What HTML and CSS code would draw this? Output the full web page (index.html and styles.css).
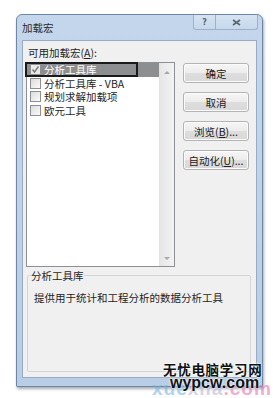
FILE: index.html
```html
<!DOCTYPE html>
<html lang="zh-CN">
<head>
<meta charset="utf-8">
<title>加载宏</title>
<link rel="stylesheet" href="styles.css">
</head>
<body>
<div class="window">
  <div class="titlebar">
    <span class="title">加载宏</span>
    <div class="caption-btns">
      <span class="cbtn help">?</span>
      <span class="cbtn close"><svg width="9" height="7" viewBox="0 0 9 7"><path d="M1 1 L8 6 M8 1 L1 6" stroke="#5a6470" stroke-width="1.6" fill="none"/></svg></span>
    </div>
  </div>
  <div class="client">
    <div class="label">可用加载宏(<u>A</u>):</div>
    <div class="main">
      <div class="listbox">
        <ul class="items">
          <li class="row selected"><span class="check on"><svg width="9" height="9" viewBox="0 0 9 9"><path d="M1.5 4.5 L3.5 7 L7.5 1.5" stroke="#7a7a7a" stroke-width="1.4" fill="none"/></svg></span><span class="text">分析工具库</span></li>
          <li class="row"><span class="check"></span><span class="text">分析工具库 - VBA</span></li>
          <li class="row"><span class="check"></span><span class="text">规划求解加载项</span></li>
          <li class="row"><span class="check"></span><span class="text">欧元工具</span></li>
        </ul>
        <div class="scrollbar">
          <span class="arrow up"></span>
          <span class="arrow down"></span>
        </div>
      </div>
      <div class="buttons">
        <span class="btn">确定</span>
        <span class="btn">取消</span>
        <span class="btn">浏览(<u>B</u>)...</span>
        <span class="btn">自动化(<u>U</u>)...</span>
      </div>
    </div>
    <fieldset class="group">
      <legend>分析工具库</legend>
      <p class="desc">提供用于统计和工程分析的数据分析工具</p>
    </fieldset>
  </div>
</div>
<div class="watermark">
  <span class="wm-back"><span class="b1">xue</span><span class="b2">xila</span><span class="b3">.com</span></span>
  <span class="wm-cn">无忧电脑学习网</span>
  <span class="wm-en">wypcw.com</span>
</div>
</body>
</html>
```
FILE: styles.css
```css
html, body {
  margin: 0;
  padding: 0;
  background: #ffffff;
}
body {
  width: 273px;
  height: 398px;
  overflow: hidden;
  position: relative;
  font-family: "Noto Sans CJK SC", "Noto Sans", sans-serif;
  font-size: 10.5px;
  color: #1e1e1e;
}
u { text-decoration: underline; }

.window {
  margin: 14px 0 0 16px;
  width: 247px;
  height: 373px;
  box-sizing: border-box;
  border: 1px solid #6f87a4;
  border-radius: 6px 6px 1px 1px;
  background: linear-gradient(#c3d6eb, #b8cee6);
  box-shadow: 1px 2px 3px rgba(60, 70, 80, 0.45);
  display: flex;
  flex-direction: column;
}

.titlebar {
  height: 25px;
  display: flex;
  align-items: flex-start;
  justify-content: space-between;
  flex: none;
}
.title {
  margin: 6px 0 0 5px;
  line-height: 13px;
  color: #2a2a2a;
}
.caption-btns {
  display: flex;
  margin-right: 4px;
}
.cbtn {
  height: 15px;
  box-sizing: border-box;
  border: 1px solid #9db2c9;
  border-top: none;
  display: flex;
  align-items: center;
  justify-content: center;
  background: linear-gradient(#d6e3f1, #c6d8ec);
  color: #5a6470;
  font-family: "DejaVu Sans", sans-serif;
  font-size: 8px;
  font-weight: bold;
}
.cbtn.help {
  width: 23px;
  border-radius: 0 0 0 3px;
}
.cbtn.close {
  width: 42px;
  border-left: none;
  border-radius: 0 0 3px 0;
}

.client {
  flex: 1;
  margin: 0 5px 8px 5px;
  background: #f0f0f0;
  border: 1px solid #97abc2;
  display: flex;
  flex-direction: column;
}
.label {
  margin: 5px 0 0 5px;
  line-height: 13px;
}
.main {
  margin-top: 3px;
  display: flex;
  align-items: flex-start;
}

.listbox {
  margin-left: 3px;
  width: 149px;
  height: 205px;
  box-sizing: border-box;
  border: 1px solid #8c8f94;
  background: #ffffff;
  display: flex;
}
.items {
  list-style: none;
  margin: 0;
  padding: 0;
  flex: 1;
}
.row {
  height: 13.5px;
  display: flex;
  align-items: center;
  position: relative;
}
.row.selected {
  background: #8d8e8f;
  color: #ffffff;
}
.row.selected::after {
  content: "";
  position: absolute;
  left: -2px;
  top: -1px;
  width: 113px;
  height: 15px;
  box-sizing: border-box;
  border: 2px solid #1a1a1a;
}
.check {
  width: 11px;
  height: 11px;
  box-sizing: border-box;
  margin: 0 3px 0 3px;
  border: 1px solid #8e8f8f;
  background: linear-gradient(135deg, #dcdcdc, #fbfbfb);
  display: flex;
  align-items: center;
  justify-content: center;
  flex: none;
}
.check.on {
  background: #e9e9e9;
}
.text {
  line-height: 13px;
  white-space: nowrap;
}

.scrollbar {
  width: 15px;
  flex: none;
  border-left: 1px solid #e2e2e2;
  background: linear-gradient(90deg, #e6e6e6, #f3f3f3);
  display: flex;
  flex-direction: column;
  justify-content: space-between;
  align-items: center;
  padding: 8px 0 6px;
  box-sizing: border-box;
}
.arrow {
  width: 0;
  height: 0;
  border-left: 3px solid transparent;
  border-right: 3px solid transparent;
}
.arrow.up { border-bottom: 3px solid #a8a8a8; }
.arrow.down { border-top: 3px solid #a8a8a8; }

.buttons {
  margin: 1px 0 0 8px;
  display: flex;
  flex-direction: column;
  gap: 9px;
}
.btn {
  width: 66px;
  height: 20px;
  box-sizing: border-box;
  border: 1px solid #b4b4b4;
  border-radius: 3px;
  background: linear-gradient(#f6f6f6 0%, #ececec 50%, #dedede 51%, #d8d8d8 100%);
  display: flex;
  align-items: center;
  justify-content: center;
  line-height: 13px;
  color: #202020;
  box-shadow: inset 0 0 0 1px #fbfbfb;
}

.group {
  margin: 2px 5px 5px 4px;
  padding: 0 0 0 6px;
  border: 1px solid #d4d4d4;
  border-radius: 2px;
  flex: 1;
  min-width: 0;
}
.group legend {
  padding: 0;
  margin-left: -3px;
  line-height: 13px;
}
.desc {
  margin: 9px 0 0 0;
  line-height: 13px;
}

.watermark {
  position: absolute;
  left: 150px;
  top: 361px;
  width: 123px;
  height: 37px;
}
.wm-back {
  position: absolute;
  left: 2px;
  top: 17px;
  font-family: "Liberation Sans", sans-serif;
  font-weight: bold;
  font-size: 19px;
  letter-spacing: 1px;
  white-space: nowrap;
  opacity: 0.55;
}
.wm-back .b1 { color: #6fb6e0; }
.wm-back .b2 { color: #b7b0d6; }
.wm-back .b3 { color: #df6fb0; }
.wm-cn {
  position: absolute;
  left: 13px;
  top: 0;
  font-family: "Noto Sans CJK SC", sans-serif;
  font-weight: bold;
  font-size: 13.5px;
  line-height: 16px;
  letter-spacing: 0.7px;
  color: #111;
  white-space: nowrap;
  text-shadow: 0 0 2px #fff, 0 0 2px #fff;
}
.wm-en {
  position: absolute;
  left: 20px;
  top: 13px;
  font-family: "Liberation Sans", sans-serif;
  font-weight: bold;
  font-size: 16px;
  line-height: 17px;
  color: #111;
  white-space: nowrap;
  text-shadow: 0 0 2px #fff, 0 0 2px #fff;
}
```
